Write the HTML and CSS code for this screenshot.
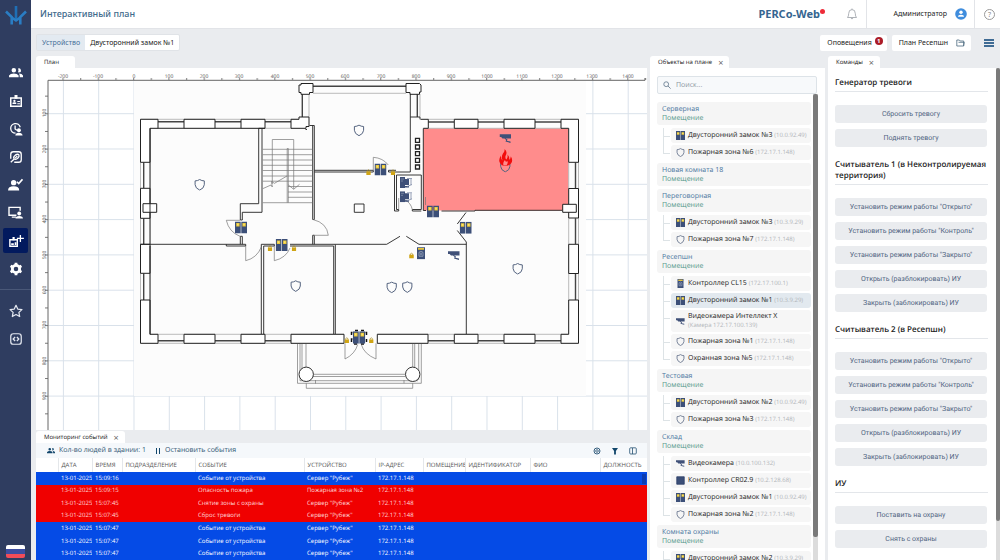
FILE: index.html
```html
<!DOCTYPE html>
<html lang="ru">

	<head>
		<meta charset="UTF-8">
		<title>Интерактивный план</title>
		<link rel="stylesheet" href="styles.css">
	</head>

	<body>
		<!-- общие значки -->
		<svg class="defs" width="0" height="0">
			<symbol id="shield" viewBox="0 0 12 12">
				<path d="M6 .8Q8 2.2 10.6 2.2V6Q10.4 9.6 6 11.4Q1.6 9.6 1.4 6V2.2Q4 2.2 6 .8Z" fill="none" stroke="#54637f" stroke-width="1" />
			</symbol>
			<symbol id="lock" viewBox="0 0 12 12">
				<path d="M0 0H5.7V12H0ZM6.3 0H12V12H6.3Z" fill="#3c4f78" />
				<path d="M1.2 1.5H4.6V5H1.2ZM7.4 1.5H10.8V5H7.4Z" fill="#e8c63a" />
				<path d="M2 2.2H3.6V4H2ZM8.2 2.2H9.8V4H8.2Z" fill="#fbe46a" />
			</symbol>
			<symbol id="reader" viewBox="0 0 8 12">
				<path d="M0 0H8V12H0Z" fill="#3c4f78" />
				<path d="M1 .8H7V2.6H1Z" fill="#e8c63a" />
				<path d="M2 5Q4 3.2 6 5V9H2ZM3 6H5M3 7.5H5" fill="none" stroke="#b9c2d4" stroke-width=".6" />
			</symbol>
			<symbol id="board" viewBox="0 0 12 12">
				<path d="M1 1H11V11H1Z" fill="#3c4f78" stroke="#2a3c66" />
			</symbol>
			<symbol id="camera" viewBox="0 0 12 10">
				<path d="M0 .8H11.5V5H3L1.6 3.4H0ZM6 5L8 6 7.4 7.200 11 8.100V9.400L6 8 6.700 6.400 5 5Z" fill="#3f5078" />
			</symbol>
			<symbol id="padlock" viewBox="0 0 4 5">
				<path d="M1 2.2V1.4Q2 0 3 1.4V2.2" fill="none" stroke="#a98b1c" stroke-width=".6" />
				<path d="M.2 2H3.8V5H.2Z" fill="#cfa414" />
			</symbol>
			<symbol id="server" viewBox="0 0 12 11">
				<path d="M0 0H5V11H0ZM4 2H9V8H4ZM5 9H9V10.5H5Z" fill="#3f5078" />
				<path d="M7 1.5H12M7 9.5L12 7.5M11 2V8" stroke="#7b88a4" stroke-width=".8" fill="none" />
				<path d="M1 2H4M1 4H3" stroke="#a9b4c9" stroke-width=".5" />
			</symbol>
			<symbol id="people" viewBox="0 0 16 12">
				<path d="M5.5 6a2.6 2.6 0 1 0 0-5.2 2.6 2.6 0 0 0 0 5.2M11.3 6a2.4 2.4 0 1 0-1-4.6q1.2 2 0 4.2ZM0 11.5V9.5Q1.5 7 5.5 7T11 9.5V11.5ZM12.3 11.5H16V9.5Q15 7.3 11.3 7.2 12.5 8.3 12.3 11.5Z" fill="currentColor" />
			</symbol>
		</svg>

		<nav class="sidebar">
			<a class="logo" href="#" aria-label="PERCo">
				<svg viewBox="0 0 22 20" width="22" height="20">
					<path d="M11 0V14" stroke="#1f6fb5" stroke-width="2.600" fill="none" />
					<path d="M1 5.500L6.700 11V18.500M21 5.500L15.300 11V18.500M6.700 11.500L11 14.500 15.300 11.500" stroke="#2a7dc3" stroke-width="2.600" fill="none" />
				</svg>
			</a>
			<a class="item" href="#" aria-label="Персонал"><svg width="14" height="11"><use href="#people" /></svg></a>
			<a class="item" href="#" aria-label="Бюро пропусков">
				<svg viewBox="0 0 16 16" width="14" height="14">
					<path d="M2 4.500H14V14H2Z" fill="none" stroke="#fff" stroke-width="1.700" />
					<path d="M6.300 1H9.700V5.500H6.300ZM4 11.500H8.300V10L7 9.300H5.300L4 10ZM9.500 8H12.500V9.200H9.500ZM9.500 10.500H12.500V11.700H9.500Z" fill="#fff" />
					<circle cx="6.200" cy="7.900" r="1.300" fill="#fff" />
				</svg>
			</a>
			<a class="item" href="#" aria-label="Контроль доступа">
				<svg viewBox="0 0 16 16" width="14" height="14">
					<path d="M7.500 12.800A5.500 5.500 0 1 1 12.800 6M7 4V8L9 9.500" fill="none" stroke="#fff" stroke-width="1.500" />
					<circle cx="11.300" cy="9.300" r="2.300" fill="#fff" />
					<path d="M7.200 15.500Q7.500 12.300 11.300 12.300T15.500 15.500Z" fill="#fff" />
				</svg>
			</a>
			<a class="item" href="#" aria-label="Учёт времени">
				<svg viewBox="0 0 16 16" width="14" height="14">
					<path d="M2 10V5Q2 2 5 2H11Q14 2 14 5V11Q14 14 11 14H6" fill="none" stroke="#fff" stroke-width="1.500" />
					<path d="M2 14L6 10.300M6 10.300Q4.500 8 6.500 6.500L8 5.300Q10 4.300 11.200 5.500 12 7 10.800 8.500L9.500 9.700Q7.500 11.300 6 10.300ZM7 9.300L9.500 6.800" fill="none" stroke="#fff" stroke-width="1.500" />
				</svg>
			</a>
			<a class="item" href="#" aria-label="Верификация">
				<svg viewBox="0 0 16 14" width="15" height="13">
					<circle cx="6" cy="5" r="2.900" fill="#fff" />
					<path d="M0 13.500Q0 9 6 9T12 13.500Z" fill="#fff" />
					<path d="M9.500 4L11.500 6 15.500 1.500" fill="none" stroke="#fff" stroke-width="1.700" />
				</svg>
			</a>
			<a class="item" href="#" aria-label="Мониторинг">
				<svg viewBox="0 0 16 14" width="15" height="13">
					<path d="M9 10H1V1.500H13V5M4 12H8.500" fill="none" stroke="#fff" stroke-width="1.500" />
					<circle cx="12" cy="8" r="2.100" fill="#fff" />
					<path d="M8 13.500Q8 10.800 12 10.800T16 13.500Z" fill="#fff" />
				</svg>
			</a>
			<a class="item active" href="#" aria-label="Интерактивный план">
				<svg viewBox="0 0 18 16" width="16" height="14">
					<path d="M2 6.500H10.500V14H2Z" fill="none" stroke="#fff" stroke-width="1.600" />
					<path d="M5 3.500H7.500V7H5ZM3.500 12.500H6.500V10.500H3.500ZM7.500 9.500H9.500V12.500H7.500Z" fill="#fff" />
					<path d="M14 1V9M10 5H18" stroke="#fff" stroke-width="1.500" />
				</svg>
			</a>
			<a class="item" href="#" aria-label="Администрирование">
				<svg viewBox="0 0 16 16" width="14" height="14">
					<circle cx="8" cy="8" r="4.200" fill="none" stroke="#fff" stroke-width="3.200" />
					<path d="M8 .8V3.500M8 12.500V15.200M1.800 4.400L4.100 5.700M11.900 10.300L14.200 11.600M1.800 11.600L4.100 10.300M11.900 5.700L14.200 4.400" stroke="#fff" stroke-width="3.200" />
				</svg>
			</a>
			<hr>
			<a class="item" href="#" aria-label="Избранное">
				<svg viewBox="0 0 16 16" width="14" height="14">
					<path d="M8 1.500L10 5.800 14.800 6.400 11.300 9.600 12.200 14.300 8 12 3.800 14.300 4.700 9.600 1.200 6.400 6 5.800Z" fill="none" stroke="#e4e8f0" stroke-width="1.400" stroke-linejoin="round" />
				</svg>
			</a>
			<a class="item" href="#" aria-label="API">
				<svg viewBox="0 0 16 16" width="14" height="14">
					<rect x="2" y="2" width="12" height="12" rx="3" fill="none" stroke="#e4e8f0" stroke-width="1.400" />
					<path d="M7 5.800L4.800 8 7 10.200M9 5.800L11.200 8 9 10.200" fill="none" stroke="#e4e8f0" stroke-width="1.500" />
				</svg>
			</a>
			<button class="flag" aria-label="Русский"></button>
		</nav>

		<div class="page">
			<header class="top">
				<h1>Интерактивный план</h1>
				<a class="brand" href="#">PERCo-Web<i></i></a>
				<button class="bell" aria-label="Уведомления">
					<svg viewBox="0 0 12 12" width="12" height="12">
						<path d="M1.500 9.500H10.500Q9.300 8.300 9.300 5.500 9.300 1.600 6 1.600T2.700 5.500Q2.700 8.300 1.500 9.500ZM4.800 10Q6 12 7.200 10M6 .5V1.600" fill="none" stroke="#9aa0a6" stroke-width=".8" />
					</svg>
				</button>
				<button class="user">Администратор
					<svg viewBox="0 0 12 12" width="12" height="12">
						<circle cx="6" cy="6" r="5.800" fill="#3f8ddd" />
						<circle cx="6" cy="4.300" r="1.700" fill="#fff" />
						<path d="M3 8.800Q3 6.700 6 6.700T9 8.800Z" fill="#fff" />
					</svg>
				</button>
				<button class="help" aria-label="Справка"><span>?</span></button>
			</header>

			<div class="bar">
				<div class="crumbs">
					<a href="#">Устройство</a>
					<span>Двусторонний замок №1</span>
				</div>
				<button class="white">Оповещения <b>1</b></button>
				<button class="white plan-name">План Ресепшн
					<svg viewBox="0 0 9 8" width="9" height="8">
						<path d="M.8 7V1H3.300L4.200 2H7.700V7ZM2.500 3.300H8.300L7.500 7" fill="none" stroke="#4d6b80" stroke-width=".8" />
					</svg>
				</button>
				<button class="menu" aria-label="Меню"><i></i><i></i><i></i></button>
			</div>

			<main>
				<section class="left">
					<div class="tabs"><span class="tab tab-plan">План</span></div>
					<div class="plan">
						<svg viewBox="36 68 611 364" preserveAspectRatio="xMinYMin slice">
							<defs>
								<pattern id="grid" x="133.500" y="77.900" width="35.300" height="35.300" patternUnits="userSpaceOnUse">
									<path d="M0 .5H35.300M.5 0V35.300" stroke="#d9e1ea" stroke-width="1" />
								</pattern>
								<pattern id="tickX" x="133" y="77" width="17.650" height="3" patternUnits="userSpaceOnUse">
									<path d="M.7 1V3" stroke="#555" stroke-width=".8" />
								</pattern>
								<pattern id="tickY" x="45" y="78" width="3" height="17.650" patternUnits="userSpaceOnUse">
									<path d="M0 .5H3" stroke="#555" stroke-width=".8" />
								</pattern>
							</defs>
							<!-- сетка и подложка -->
							<rect x="48" y="80" width="600" height="352" fill="url(#grid)" />
							<rect x="134" y="81" width="452" height="315" fill="#fcfcfc" />
							<!-- линейки -->
							<rect x="49" y="77" width="599" height="3" fill="url(#tickX)" />
							<rect x="45" y="82" width="3" height="350" fill="url(#tickY)" />
							<path d="M48 432V80.300H645V78" fill="none" stroke="#666" stroke-width="1" />
							<g class="scale">
								<text x="63" y="78">-200</text><text x="98" y="78">-100</text><text x="134" y="78">0</text>
								<text x="169" y="78">100</text><text x="204" y="78">200</text><text x="239" y="78">300</text>
								<text x="275" y="78">400</text><text x="310" y="78">500</text><text x="345" y="78">600</text>
								<text x="381" y="78">700</text><text x="416" y="78">800</text><text x="451" y="78">900</text>
								<text x="487" y="78">1000</text><text x="522" y="78">1100</text><text x="557" y="78">1200</text>
								<text x="592" y="78">1300</text><text x="628" y="78">1400</text>
							</g>
							<g class="scale">
								<text transform="translate(46 113) rotate(-90)">100</text><text transform="translate(46 149) rotate(-90)">200</text>
								<text transform="translate(46 184) rotate(-90)">300</text><text transform="translate(46 219) rotate(-90)">400</text>
								<text transform="translate(46 255) rotate(-90)">500</text><text transform="translate(46 290) rotate(-90)">600</text>
								<text transform="translate(46 325) rotate(-90)">700</text><text transform="translate(46 361) rotate(-90)">800</text>
								<text transform="translate(46 396) rotate(-90)">900</text>
							</g>

							<!-- пожарная зона -->
							<rect x="423.300" y="128.500" width="145" height="82" fill="#ff8c8c" />

							<!-- окна -->
							<g class="thin">
								<path d="M140.500 119.300H309M428 119.300H578.500M150 128.300H300M423 128.300H568M150 334.300H344M377 334.300H568.700M140.500 343.300H344M377 343.300H578.500" />
								<path d="M140.500 119V343M150.200 128V334M578.500 119V343M568.700 128V334" />
							</g>
							<g class="glass">
								<path d="M158 121.800H184M215 121.800H241M265 121.800H291M428 122H454M478 122H504M535 122H561" />
								<path d="M158 340.700H184M215 340.700H241M265 340.700H291M428 340.700H454M478 340.700H504M535 340.700H561" />
								<path d="M143.700 162.300V188M143.700 218.300V244M143.700 273.300V300M575.500 162.300V188M575.500 218.300V244M575.500 273.300V300" />
								<path d="M313 86.300H406M302.300 94V117M417.300 94V117" />
							</g>
							<path class="thin" d="M313 93.300H406M309 94V117M420 94V117" />

							<!-- простенки -->
							<g class="wall">
								<path d="M150 162.300H140.500V119.300H158V128.300H150ZM184 119.300H215V128.300H184ZM241 119.300H265V128.300H241ZM291 119.300H299V117H309V126.500H306V128.300H291Z" />
								<path d="M150 188.300H140.500V218.300H150ZM140.500 244.300H150V273.300H140.500ZM140.500 300H150V334.300H158V343.300H140.500Z" />
								<path d="M143 203.700H156.700V212.300H143Z" />
								<path d="M184 334.300H215V343.300H184ZM241 334.300H265V343.300H241ZM291 334.300H344V343.300H291Z" />
								<path d="M377.300 334.300H428V343.300H377.300ZM454.300 334.300H478V343.300H454.300ZM504 334.300H535V343.300H504ZM561 334.300H568.700V300H578.500V343.300H561Z" />
								<path d="M568.700 244.300H578.500V273.500H568.700ZM568.700 188.500H578.500V218H568.700ZM568.700 162.300V128.300H561V119.300H578.500V162.300Z" />
								<path d="M562.700 204.300H576.300V212.300H562.700Z" />
								<path d="M504 119.300H535V128.300H504ZM454.300 119.300H478V128.300H454.300ZM420.500 119.300H428.300V128.300H423.300" />
								<path d="M299 85H301V83.500H313V92.500H309.500V94.300H301V92.500H299ZM406 85V83.500H419.500L421 85V92H419.500V94.300H410V92.500H406Z" />
							</g>

							<!-- перегородки -->
							<g class="line">
								<path d="M150 128.300V244.300M150 246V334.300M258.700 128.300V203.700H240.300V220M262 128.300V212.300H242.300V220H240.300M240.300 236.300H242.300V244.300M240.300 236.300V244.300M258.700 128.300H265M184 128.300H158M215 128.300H241" />
								<path d="M312.700 125.500V219.500H314.300V125.500H309.500M312.700 235.300H314.300V244.300M312.700 235.300V244.300M305.500 129.500H307" />
								<path d="M314.300 170.300H373.300M314.300 172H373.300V170.300M388.500 170.300V172H410.300V94M388.500 170.300H396M410.300 117H420V119.300" />
								<path d="M394.500 172V211H398.700V209.500H396.500V175H421.300V209.500H412.300V211H421.300M423.300 128.500V210.500H426" />
								<path d="M140.500 244.300H245.700V246H226.300V244.300M261.300 334V244.300H274.300V246H263.700V334M290 244.300H335.300M335.300 244.300H386.700L400 236.300M290 246H333.700V334M335.300 334V244.300M406.300 236.300L419 244.300H466.300" />
								<path d="M466.300 334V242L457.300 230.500M457.300 224L466 212.500M441.500 211H475V210.300H562" />
								<path d="M354.300 204H364V212.300H354.300Z" />
							</g>
							<g class="vent">
								<path d="M415.500 138.300H419.500V142.300H415.500ZM415.500 145H419.500V149H415.500ZM415.500 151.700H419.500V155.700H415.500ZM415.500 158.300H419.500V162.300H415.500ZM415.500 165H419.500V169H415.500Z" />
							</g>

							<!-- лестница -->
							<g class="stairs">
								<path d="M262.700 149.300H312.300M262.700 154.700H312.300M262.700 160H312.300M262.700 165.300H312.300M262.700 170.500H312.300M262.700 176H312.300M262.700 181.200H312.300M288 186.500H312.300M288 192H312.300M288 197.300H312.300M262.700 202.700H312.300" />
								<path d="M287.200 202.700V148.500H288.300V202.700M272.300 184V139.500H293.700V189M288 184.700L293.700 189.300 299.500 184.300M262.700 188.700L271 185 272.300 187 271.500 181.500 274.500 183.300 287 176" />
							</g>

							<!-- двери -->
							<g class="door">
								<path d="M240 220.300H226.300Q229 232 240 236.300M245.700 246V260.700Q257 258 261.300 247M274.300 246V260.700Q286 258 290 248" />
								<path d="M313 219.500Q327 223 328.300 235.300H313M373.300 170.500V157.300Q383 158 388.300 165M398.700 209V198M412.300 209.500Q411 203 405 200M425.500 205V197" />
								<path d="M345 343.300V359Q355 354 357.700 344.500M376 343.300V359Q364 354 361.300 344.500" />
							</g>

							<!-- крыльцо -->
							<g class="porch">
								<path d="M297.500 344V383.300H315.500V380M300 344V380.700M302 344V370M306 344V367M412.700 344V367M414.700 344V367M418.700 344V380M421.300 344V383.300H404V380" />
								<path d="M313 374.300H405M313 376.500H405M300 380.700H418M315 383.300H404M306.300 383.300V388.300H412.700V383.300" />
							</g>
							<g class="column">
								<circle cx="306.200" cy="374.300" r="7.200" />
								<circle cx="412.700" cy="374.300" r="7.200" />
							</g>

							<!-- устройства -->
							<use href="#lock" x="235" y="221.500" width="12" height="12" />
							<use href="#lock" x="275.700" y="239" width="12" height="12" />
							<use href="#lock" x="374.500" y="163.500" width="12" height="12" />
							<use href="#lock" x="427" y="205.500" width="12" height="12" />
							<use href="#lock" x="459.700" y="221.700" width="12" height="12" />
							<path d="M352.500 332.500H351.500V335M355 330.500H358M361 330.500H364M365.500 332.500H366.500V335M352.500 339H351.500V342M354 344H357M361 344H364M366.500 339V342" fill="none" stroke="#111" stroke-width="1.500" />
							<use href="#lock" x="352.800" y="331.300" width="12.500" height="12.500" />
							<use href="#padlock" x="267.500" y="245" width="5" height="6" />
							<use href="#padlock" x="291.500" y="245" width="5" height="6" />
							<use href="#padlock" x="366" y="169" width="5" height="6" />
							<use href="#padlock" x="390.500" y="169" width="5" height="6" />
							<use href="#padlock" x="409" y="252.300" width="5" height="6.300" />
							<use href="#padlock" x="344.300" y="337" width="5" height="6" />
							<use href="#padlock" x="368.800" y="337" width="5" height="6" />
							<use href="#reader" x="417" y="247" width="8" height="12.500" />
							<use href="#camera" x="448" y="250.500" width="12" height="10" />
							<use href="#camera" x="499.500" y="133.500" width="12" height="10" />
							<use href="#server" x="400" y="177" width="12" height="11" />
							<use href="#server" x="400" y="191.300" width="12" height="11" />
							<use href="#shield" x="193.700" y="178.700" width="12" height="12" />
							<use href="#shield" x="353" y="124.300" width="12" height="12" />
							<use href="#shield" x="289.700" y="280" width="12" height="12" />
							<use href="#shield" x="385.700" y="281.300" width="12" height="12" />
							<use href="#shield" x="401.300" y="281" width="12" height="12" />
							<use href="#shield" x="511.700" y="262.700" width="12" height="12" />
							<use href="#shield" x="499.300" y="160.500" width="12" height="12" />
							<path d="M504.500 149Q508 152 505.500 156 505 158.500 506.500 159.500 508.300 157 507.300 154.500 510 156.500 509 160 511 158.500 510.700 156.300 513.500 160 511 163.500 509 166 505.500 166 501.500 166 500 163 498 160 501 155.500 500.700 158.500 502.500 160.500 501 156.500 503 153.500 505 151.500 504.500 149Z" fill="#f20d0d" />
							<path d="M503.500 165.500Q502.500 162.500 505 160 505.500 163 507.500 161 508.500 163.500 506.500 165.500Z" fill="#ff8c8c" />
						</svg>
					</div>

					<div class="tabs events-tabs"><span class="tab">Мониторинг событий <button class="close" aria-label="Закрыть">×</button></span></div>
					<div class="events">
						<div class="tools">
							<svg class="ico" width="8" height="7" viewBox="0 0 16 14"><use href="#people" width="16" height="14" /></svg>
							<span>Кол-во людей в здании: 1</span>
							<button class="pause"><i></i>Остановить события</button>
							<button class="tool" aria-label="Настройки">
								<svg viewBox="0 0 8 8" width="8" height="8"><circle cx="4" cy="4" r="3" fill="none" stroke="#245072" stroke-width=".9" /><circle cx="4" cy="4" r="1.300" fill="none" stroke="#245072" stroke-width=".8" /></svg>
							</button>
							<button class="tool" aria-label="Фильтр">
								<svg viewBox="0 0 8 8" width="8" height="8"><path d="M1 1H7L4.900 4V7.500H3.100V4Z" fill="#12466b" /></svg>
							</button>
							<button class="tool" aria-label="Колонки">
								<svg viewBox="0 0 8 8" width="8" height="8"><rect x=".7" y=".8" width="6.600" height="6.200" rx="1" fill="none" stroke="#245072" stroke-width=".8" /><path d="M3.500 1V7" stroke="#245072" stroke-width=".8" /></svg>
							</button>
						</div>
						<table>
							<colgroup>
								<col class="c-mark"><col class="c-date"><col class="c-time"><col class="c-dep"><col><col class="c-ip"><col class="c-ip"><col class="c-room"><col class="c-id"><col class="c-name"><col class="c-post">
							</colgroup>
							<thead>
								<tr><th></th><th>ДАТА</th><th>ВРЕМЯ</th><th>ПОДРАЗДЕЛЕНИЕ</th><th>СОБЫТИЕ</th><th>УСТРОЙСТВО</th><th>IP-АДРЕС</th><th>ПОМЕЩЕНИЕ</th><th>ИДЕНТИФИКАТОР</th><th>ФИО</th><th>ДОЛЖНОСТЬ</th></tr>
							</thead>
							<tbody>
								<tr class="blue"><td></td><td>13-01-2025</td><td>15:09:16</td><td></td><td>Событие от устройства</td><td>Сервер "Рубеж"</td><td>172.17.1.148</td><td></td><td></td><td></td><td></td></tr>
								<tr class="red"><td></td><td>13-01-2025</td><td>15:09:15</td><td></td><td>Опасность пожара</td><td>Пожарная зона №2</td><td>172.17.1.148</td><td></td><td></td><td></td><td></td></tr>
								<tr class="red"><td></td><td>13-01-2025</td><td>15:07:45</td><td></td><td>Снятие зоны с охраны</td><td>Сервер "Рубеж"</td><td>172.17.1.148</td><td></td><td></td><td></td><td></td></tr>
								<tr class="red"><td></td><td>13-01-2025</td><td>15:07:45</td><td></td><td>Сброс тревоги</td><td>Сервер "Рубеж"</td><td>172.17.1.148</td><td></td><td></td><td></td><td></td></tr>
								<tr class="blue"><td></td><td>13-01-2025</td><td>15:07:47</td><td></td><td>Событие от устройства</td><td>Сервер "Рубеж"</td><td>172.17.1.148</td><td></td><td></td><td></td><td></td></tr>
								<tr class="blue"><td></td><td>13-01-2025</td><td>15:07:47</td><td></td><td>Событие от устройства</td><td>Сервер "Рубеж"</td><td>172.17.1.148</td><td></td><td></td><td></td><td></td></tr>
								<tr class="blue"><td></td><td>13-01-2025</td><td>15:07:47</td><td></td><td>Событие от устройства</td><td>Сервер "Рубеж"</td><td>172.17.1.148</td><td></td><td></td><td></td><td></td></tr>
							</tbody>
						</table>
						<i class="thumb"></i>
					</div>
				</section>

				<section class="objects">
					<div class="tabs"><span class="tab">Объекты на плане <button class="close" aria-label="Закрыть">×</button></span></div>
					<div class="panel">
						<label class="search">
							<svg viewBox="0 0 8 8" width="8" height="8"><circle cx="3.200" cy="3.200" r="2.400" fill="none" stroke="#6d8194" stroke-width=".9" /><path d="M5 5L7.600 7.600" stroke="#6d8194" stroke-width=".9" /></svg>
							<input type="text" placeholder="Поиск..." aria-label="Поиск">
						</label>
						<div class="tree">
							<h3>Серверная<small>Помещение</small></h3>
							<ul>
								<li><svg><use href="#lock" /></svg><p>Двусторонний замок №3 <em>(10.0.92.49)</em></p></li>
								<li><svg><use href="#shield" /></svg><p>Пожарная зона №6 <em>(172.17.1.148)</em></p></li>
							</ul>
							<h3>Новая комната 18<small>Помещение</small></h3>
							<h3>Переговорная<small>Помещение</small></h3>
							<ul>
								<li><svg><use href="#lock" /></svg><p>Двусторонний замок №3 <em>(10.3.9.29)</em></p></li>
								<li><svg><use href="#shield" /></svg><p>Пожарная зона №7 <em>(172.17.1.148)</em></p></li>
							</ul>
							<h3>Ресепшн<small>Помещение</small></h3>
							<ul>
								<li><svg><use href="#reader" /></svg><p>Контроллер CL15 <em>(172.17.100.1)</em></p></li>
								<li class="selected"><svg><use href="#lock" /></svg><p>Двусторонний замок №1 <em>(10.3.9.29)</em></p></li>
								<li class="tall"><svg><use href="#camera" /></svg><p>Видеокамера Интеллект X<br><em>(Камера 172.17.100.139)</em></p></li>
								<li><svg><use href="#shield" /></svg><p>Пожарная зона №1 <em>(172.17.1.148)</em></p></li>
								<li><svg><use href="#shield" /></svg><p>Охранная зона №5 <em>(172.17.1.148)</em></p></li>
							</ul>
							<h3>Тестовая<small>Помещение</small></h3>
							<ul>
								<li><svg><use href="#lock" /></svg><p>Двусторонний замок №2 <em>(10.0.92.49)</em></p></li>
								<li><svg><use href="#shield" /></svg><p>Пожарная зона №3 <em>(172.17.1.148)</em></p></li>
							</ul>
							<h3>Склад<small>Помещение</small></h3>
							<ul>
								<li><svg><use href="#camera" /></svg><p>Видеокамера <em>(10.0.100.132)</em></p></li>
								<li><svg><use href="#board" /></svg><p>Контроллер CR02.9 <em>(10.2.128.68)</em></p></li>
								<li><svg><use href="#lock" /></svg><p>Двусторонний замок №1 <em>(10.0.92.49)</em></p></li>
								<li><svg><use href="#shield" /></svg><p>Пожарная зона №2 <em>(172.17.1.148)</em></p></li>
							</ul>
							<h3>Комната охраны<small>Помещение</small></h3>
							<ul>
								<li><svg><use href="#lock" /></svg><p>Двусторонний замок №2 <em>(10.3.9.29)</em></p></li>
							</ul>
						</div>
						<div class="scroll"><i></i></div>
					</div>
				</section>

				<section class="commands">
					<div class="tabs"><span class="tab">Команды <button class="close" aria-label="Закрыть">×</button></span></div>
					<div class="panel">
						<div class="list">
							<h2>Генератор тревоги</h2>
							<button>Сбросить тревогу</button>
							<button>Поднять тревогу</button>
							<h2>Считыватель 1 (в Неконтролируемая территория)</h2>
							<button>Установить режим работы "Открыто"</button>
							<button>Установить режим работы "Контроль"</button>
							<button>Установить режим работы "Закрыто"</button>
							<button>Открыть (разблокировать) ИУ</button>
							<button>Закрыть (заблокировать) ИУ</button>
							<h2>Считыватель 2 (в Ресепшн)</h2>
							<button>Установить режим работы "Открыто"</button>
							<button>Установить режим работы "Контроль"</button>
							<button>Установить режим работы "Закрыто"</button>
							<button>Открыть (разблокировать) ИУ</button>
							<button>Закрыть (заблокировать) ИУ</button>
							<h2>ИУ</h2>
							<button>Поставить на охрану</button>
							<button>Снять с охраны</button>
						</div>
						<div class="scroll"><i></i></div>
					</div>
				</section>
			</main>
		</div>
	</body>

</html>
```
FILE: styles.css
```css
* {
	margin: 0;
	padding: 0;
	box-sizing: border-box;
}

body {
	display: flex;
	height: 100vh;
	overflow: hidden;
	background: #eaecef;
	font: 7px/9px "Open Sans", "Noto Sans", sans-serif;
	color: #222;
}

button,
input {
	border: 0;
	background: none;
	font: inherit;
	color: inherit;
	text-rendering: inherit;
}

a {
	color: inherit;
	text-decoration: none;
}

svg {
	display: block;
	flex: none;
}

.defs {
	position: absolute;
}

/* боковое меню */
.sidebar {
	display: flex;
	flex-direction: column;
	align-items: center;
	flex: none;
	width: 31px;
	gap: 3px;
	background: #2f3d60;
	color: #fff;
}

.sidebar .logo {
	height: 51px;
	padding-top: 6px;
}

.sidebar .item {
	display: flex;
	align-items: center;
	justify-content: center;
	flex: none;
	width: 25px;
	height: 25px;
	border-radius: 2px;
}

.logo + .item {
	margin-top: 6px;
}

.sidebar .active {
	background: #021a5e;
}

.sidebar hr {
	width: 100%;
	margin: 5px 0;
	border: 0;
	border-top: 1px solid #4a5878;
}

.flag {
	width: 19px;
	height: 13px;
	margin: auto 0 2px;
	border-radius: 2px;
	background: linear-gradient(#fff 33%, #3d4da0 33%, #3d4da0 66%, #f24c58 66%);
}

.page {
	display: flex;
	flex-direction: column;
	flex: 1;
	min-width: 0;
}

/* шапка */
.top,
.bar {
	font-family: "Noto Sans", sans-serif;
}

.top {
	display: flex;
	align-items: stretch;
	flex: none;
	height: 29px;
	background: #fff;
	border-bottom: 1px solid #e2e4e8;
	line-height: 28px;
}

.top h1 {
	flex: 1;
	padding-left: 9px;
	font-size: 9px;
	font-weight: 500;
	color: #416a8c;
}

.brand {
	display: flex;
	font-size: 11px;
	font-weight: 700;
	color: #356590;
}

.brand i {
	width: 5px;
	height: 5px;
	margin-top: 9px;
	border-radius: 50%;
	background: #ee2b38;
}

.bell {
	display: flex;
	align-items: center;
	justify-content: center;
	width: 41px;
	padding-left: 12px;
}

.user {
	display: flex;
	align-items: center;
	justify-content: flex-end;
	gap: 8px;
	width: 108px;
	padding-right: 7px;
	border-left: 1px solid #e2e4e8;
}

.help {
	display: flex;
	align-items: center;
	justify-content: center;
	width: 26px;
	border-left: 1px solid #e2e4e8;
	color: #888;
}

.help span {
	width: 11px;
	height: 11px;
	margin-left: 4px;
	border: 1px solid #999;
	border-radius: 50%;
	line-height: 9px;
}

/* строка под шапкой */
.bar {
	display: flex;
	align-items: center;
	flex: none;
	gap: 5px;
	height: 27px;
	padding: 0 6px 0 5px;
}

.crumbs {
	display: flex;
	margin-right: auto;
	border: 1px solid #e0e3e7;
	border-radius: 2px;
	background: #fff;
	line-height: 15px;
}

.crumbs a {
	padding: 0 5px;
	background: #e3eaf1;
	color: #47719a;
}

.crumbs span {
	padding: 0 5px;
}

.white {
	display: flex;
	align-items: center;
	height: 16px;
	padding: 0 4px 0 7px;
	border-radius: 2px;
	background: #fff;
}

.white b {
	width: 8px;
	height: 8px;
	margin: -4px 0 0 3px;
	border-radius: 50%;
	background: #ab1c28;
	color: #fff;
	font-size: 6px;
	line-height: 8px;
}

.plan-name {
	gap: 8px;
	padding: 0 6px 0 7px;
}

.menu {
	width: 10px;
	margin-left: 8px;
}

.menu i {
	display: block;
	height: 2px;
	margin: 1px 0;
	background: #3f6b94;
}

/* рабочая область */
main {
	display: grid;
	grid-template-columns: minmax(0, 1fr) 175px 172px;
	gap: 3px;
	flex: 1;
	min-height: 0;
	padding-left: 5px;
	text-rendering: geometricPrecision;
}

section {
	display: flex;
	flex-direction: column;
	min-width: 0;
	min-height: 0;
}

.tabs {
	display: flex;
	flex: none;
	height: 12px;
}

.tab {
	display: flex;
	align-items: center;
	gap: 6px;
	padding: 0 6px 0 8px;
	border-radius: 3px 3px 0 0;
	background: #fff;
	font-size: 6px;
	font-weight: 500;
	color: #111;
}

.tab-plan {
	padding: 0 16px 0 8px;
}

.close {
	font-size: 9px;
	line-height: 9px;
	color: #555;
}

.plan {
	flex: 1;
	min-height: 0;
	background: #fff;
}

.plan svg {
	width: 100%;
	height: 100%;
}

.scale {
	font-size: 5px;
	text-anchor: middle;
	fill: #555;
}

.wall,
.line,
.thin,
.porch,
.door,
.stairs,
.glass {
	fill: none;
	stroke: #222;
	stroke-width: .9;
}

.wall {
	fill: #fff;
	stroke-width: 1;
}

.thin {
	stroke: #aaa;
	stroke-width: .8;
}

.porch,
.door,
.stairs {
	stroke: #777;
	stroke-width: .7;
}

.glass {
	stroke: #444;
	stroke-width: 1.4;
}

.vent {
	fill: #fff;
	stroke: #222;
	stroke-width: 1.3;
}

.column {
	fill: #fff;
	stroke: #333;
}

/* журнал событий */
.events-tabs {
	margin-top: 1px;
}

.events {
	position: relative;
	display: flex;
	flex-direction: column;
	flex: none;
	height: 117px;
	background: #fff;
}

.tools {
	display: flex;
	align-items: center;
	flex: none;
	gap: 4px;
	height: 15px;
	padding: 0 10px 0 11px;
	background: #f5f8fb;
	color: #2f5673;
}

.ico {
	color: #12466b;
}

.pause {
	display: flex;
	align-items: center;
	gap: 5px;
	margin: 0 auto 0 6px;
}

.pause i {
	width: 4px;
	height: 6px;
	border: solid #12466b;
	border-width: 0 1px;
}

.tool {
	width: 8px;
	margin-left: 6px;
}

.thumb {
	position: absolute;
	top: 31px;
	right: 1px;
	width: 4px;
	height: 10px;
	background: #0a3bb0;
}

table {
	flex: 1;
	width: 100%;
	height: 102px;
	table-layout: fixed;
	border-collapse: collapse;
	font-size: 6px;
}

th,
td {
	padding: 0 0 0 3px;
	overflow: hidden;
	text-align: left;
	white-space: nowrap;
}

th {
	height: 14px;
	border-left: 1px solid #e4e7ea;
	font-weight: 400;
	color: #555;
}

th:first-child {
	border-left: 0;
}

.blue {
	background: #054be6;
	color: #fff;
}

.red {
	background: #f00000;
	color: #ffd9d9;
}

.c-mark { width: 22px; }
.c-date { width: 34px; }
.c-time { width: 30px; }
.c-dep { width: 73px; }
.c-ip { width: 71px; }
.c-ip + .c-ip { width: 48px; }
.c-room { width: 42px; }
.c-id { width: 65px; }
.c-name { width: 70px; }
.c-post { width: 47px; }

/* объекты */
.panel {
	position: relative;
	flex: 1;
	min-height: 0;
	overflow: hidden;
	background: #fff;
}

.objects .panel {
	padding: 8px 14px 0 7px;
}

.search {
	display: flex;
	align-items: center;
	gap: 5px;
	height: 18px;
	margin: 0 -6px 8px 0;
	padding: 0 5px;
	border: 1px solid #dde3e8;
	border-radius: 2px;
	background: #f7f9fb;
}

.search input {
	flex: 1;
	min-width: 0;
	outline: 0;
}

.search input::placeholder {
	color: #8a959f;
}

.tree h3 {
	height: 23px;
	margin-bottom: 3px;
	padding: 3px 5px 0;
	border-radius: 3px;
	background: #f5f5f5;
	font-size: 7px;
	font-weight: 400;
	color: #4a76a0;
}

.tree small {
	display: block;
	font-size: 7px;
	color: #55988a;
}

.tree ul {
	display: grid;
	gap: 2px;
	margin: 0 0 3px 6px;
	padding-left: 8px;
	list-style: none;
}

.tree li {
	position: relative;
	display: flex;
	align-items: center;
	gap: 3px;
	height: 15px;
	padding-left: 5px;
	border-radius: 3px;
	background: #f6f6f6;
	white-space: nowrap;
}

/* ветка дерева слева от строки */
.tree li::before {
	content: "";
	position: absolute;
	left: -8px;
	top: -9px;
	width: 6px;
	height: 17px;
	border: solid #dde3e6;
	border-width: 0 0 1px 1px;
}

.tree li:first-child::before {
	top: 0;
	height: 8px;
}

.tree li.tall {
	height: 22px;
}

.tree li.tall + li::before {
	top: -16px;
	height: 24px;
}

.tree li.selected {
	background: #e2e9ef;
}

.tree li svg {
	width: 9px;
	height: 9px;
}

.tree em {
	font-style: normal;
	font-size: 6px;
	color: #b1b5b9;
}

.scroll {
	position: absolute;
	top: 26px;
	right: 7px;
	bottom: 0;
	width: 5px;
	background: #dcdcdc;
}

.scroll i {
	display: block;
	height: 95%;
	border-radius: 2px;
	background: #7a7a7a;
}

/* команды */
.commands .list {
	display: flex;
	flex-direction: column;
	gap: 6px;
	padding: 9px 13px 0 7px;
}

.commands h2 {
	margin: 6px -1px 7px 0;
	padding-bottom: 3px;
	border-bottom: 1px solid #e3e6ea;
	font-size: 8px;
	line-height: 11px;
	font-weight: 600;
}

.commands h2:first-child {
	margin-top: 0;
}

.commands .list button {
	flex: none;
	height: 18px;
	border-radius: 3px;
	background: #eaecef;
	font: 7px/18px Roboto, sans-serif;
	color: #516582;
}

.commands .scroll {
	top: 0;
	right: 0;
	width: 4px;
}

.commands .scroll i {
	height: 92%;
}
```
